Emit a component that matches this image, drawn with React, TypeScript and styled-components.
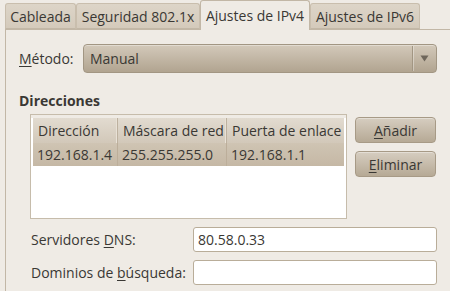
import React from 'react'
import styled, { createGlobalStyle } from 'styled-components'

const Global = createGlobalStyle`
  html, body {
    margin: 0;
    padding: 0;
    background: #efebe5;
  }
  body {
    font-family: "Open Sans", "DejaVu Sans", sans-serif;
    font-size: 14px;
    color: #3a3834;
  }
`

const Window = styled.div`
  width: 450px;
  height: 291px;
  overflow: hidden;
  background: #efebe5;
  padding-left: 5px;
  box-sizing: border-box;
`

const TabBar = styled.div`
  display: flex;
  align-items: flex-end;
  height: 29px;
`

const Tab = styled.div<{ $active?: boolean; $w: number }>`
  width: ${(p) => p.$w}px;
  height: ${(p) => (p.$active ? 30 : 26)}px;
  margin-bottom: ${(p) => (p.$active ? -1 : 0)}px;
  box-sizing: border-box;
  display: flex;
  align-items: center;
  justify-content: center;
  padding-top: ${(p) => (p.$active ? 0 : 1)}px;
  background: ${(p) => (p.$active ? '#efebe5' : 'linear-gradient(#ddd5c8, #d4cabb)')};
  border: 1px solid ${(p) => (p.$active ? '#c2b7a6' : '#c9bead')};
  border-bottom: ${(p) => (p.$active ? 'none' : '1px solid #c2b7a6')};
  border-radius: 3px 3px 0 0;
  position: relative;
  z-index: ${(p) => (p.$active ? 1 : 0)};
  white-space: nowrap;
`

const Panel = styled.div`
  border-top: 1px solid #c2b7a6;
  border-left: 1px solid #c2b7a6;
  height: 262px;
  box-sizing: border-box;
  padding: 14px 0 0 13px;
  display: flex;
  flex-direction: column;
`

const Row = styled.div`
  display: flex;
  align-items: center;
`

const Label = styled.div<{ $w: number; $indent?: number }>`
  width: ${(p) => p.$w}px;
  padding-left: ${(p) => p.$indent || 0}px;
  box-sizing: border-box;
  white-space: nowrap;
`

const U = styled.span`
  text-decoration: underline;
  text-underline-offset: 2px;
`

const Combo = styled.div`
  width: 354px;
  height: 29px;
  box-sizing: border-box;
  border: 1px solid #a29683;
  border-radius: 4px;
  background: linear-gradient(#d3c9ba, #b1a490);
  display: flex;
  align-items: stretch;
  box-shadow: inset 0 1px 0 rgba(255, 255, 255, 0.35);
`

const ComboText = styled.div`
  flex: 1;
  display: flex;
  align-items: center;
  padding-left: 6px;
`

const ComboArrow = styled.div`
  width: 23px;
  border-left: 1px solid #a29683;
  box-shadow: inset 1px 0 0 rgba(255, 255, 255, 0.35);
  display: flex;
  align-items: center;
  justify-content: center;
  margin: 1px 0;
`

const Heading = styled.div`
  font-weight: bold;
  margin-top: 19px;
  line-height: 17px;
`

const AddrRow = styled.div`
  display: flex;
  margin-top: 5px;
  margin-left: 11px;
`

const TableFrame = styled.div`
  width: 317px;
  height: 105px;
  box-sizing: border-box;
  border: 1px solid #c6bcab;
  padding: 3px 2px 0 2px;
  background: linear-gradient(#efebe5 0 3px, #ffffff 3px);
  display: flex;
  flex-direction: column;
`

const Grid = styled.div`
  display: grid;
  grid-template-columns: 85px 109px 1fr;
`

const HeadCell = styled.div<{ $last?: boolean }>`
  height: 25px;
  box-sizing: border-box;
  display: flex;
  align-items: center;
  padding-left: 5px;
  background: linear-gradient(#e2dbd0, #d2c8b9);
  border-right: ${(p) => (p.$last ? 'none' : '1px solid #bdb19f')};
  box-shadow: ${(p) => (p.$last ? 'none' : 'inset -1px 0 0 #e8e1d6')};
  white-space: nowrap;
`

const Cell = styled.div<{ $last?: boolean }>`
  height: 23px;
  box-sizing: border-box;
  display: flex;
  align-items: center;
  padding-left: 4px;
  background: linear-gradient(#cfc4b3, #c5b8a5);
  border-right: ${(p) => (p.$last ? 'none' : '1px solid #bcae9a')};
  white-space: nowrap;
`

const Buttons = styled.div`
  display: flex;
  flex-direction: column;
  gap: 8px;
  margin-left: 8px;
  margin-top: 3px;
`

const Button = styled.div`
  width: 81px;
  height: 26px;
  box-sizing: border-box;
  border: 1px solid #a79a86;
  border-radius: 4px;
  background: linear-gradient(#d6cdc0, #b6a995);
  box-shadow: inset 0 1px 0 rgba(255, 255, 255, 0.35);
  display: flex;
  align-items: center;
  justify-content: center;
`

const FieldRow = styled.div<{ $top: number }>`
  display: flex;
  align-items: center;
  margin-top: ${(p) => p.$top}px;
`

const Input = styled.div`
  width: 244px;
  height: 25px;
  box-sizing: border-box;
  border: 1px solid #b9ad99;
  border-radius: 3px;
  background: #ffffff;
  display: flex;
  align-items: center;
  padding-left: 4px;
`

const ArrowDown = () => (
  <svg width="9" height="7" viewBox="0 0 9 7">
    <path d="M0.5 0.5 H8.5 L4.5 6.5 Z" fill="#6e665b" />
  </svg>
)

export default function App() {
  return (
    <Window>
      <Global />
      <TabBar>
        <Tab $w={71}>Cableada</Tab>
        <Tab $w={124}>Seguridad 802.1x</Tab>
        <Tab $w={110} $active>Ajustes de IPv4</Tab>
        <Tab $w={110}>Ajustes de IPv6</Tab>
      </TabBar>
      <Panel>
        <Row>
          <Label $w={64}>
            <U>M</U>étodo:
          </Label>
          <Combo>
            <ComboText>Manual</ComboText>
            <ComboArrow>
              <ArrowDown />
            </ComboArrow>
          </Combo>
        </Row>
        <Heading>Direcciones</Heading>
        <AddrRow>
          <TableFrame>
            <Grid>
              <HeadCell>Dirección</HeadCell>
              <HeadCell>Máscara de red</HeadCell>
              <HeadCell $last>Puerta de enlace</HeadCell>
              <Cell>192.168.1.4</Cell>
              <Cell>255.255.255.0</Cell>
              <Cell $last>192.168.1.1</Cell>
            </Grid>
          </TableFrame>
          <Buttons>
            <Button>
              <span>
                <U>A</U>ñadir
              </span>
            </Button>
            <Button>
              <span>
                <U>E</U>liminar
              </span>
            </Button>
          </Buttons>
        </AddrRow>
        <FieldRow $top={8}>
          <Label $w={174} $indent={12}>
            Servidores <U>D</U>NS:
          </Label>
          <Input>80.58.0.33</Input>
        </FieldRow>
        <FieldRow $top={8}>
          <Label $w={174} $indent={12}>
            Dominios de <U>b</U>úsqueda:
          </Label>
          <Input />
        </FieldRow>
      </Panel>
    </Window>
  )
}
